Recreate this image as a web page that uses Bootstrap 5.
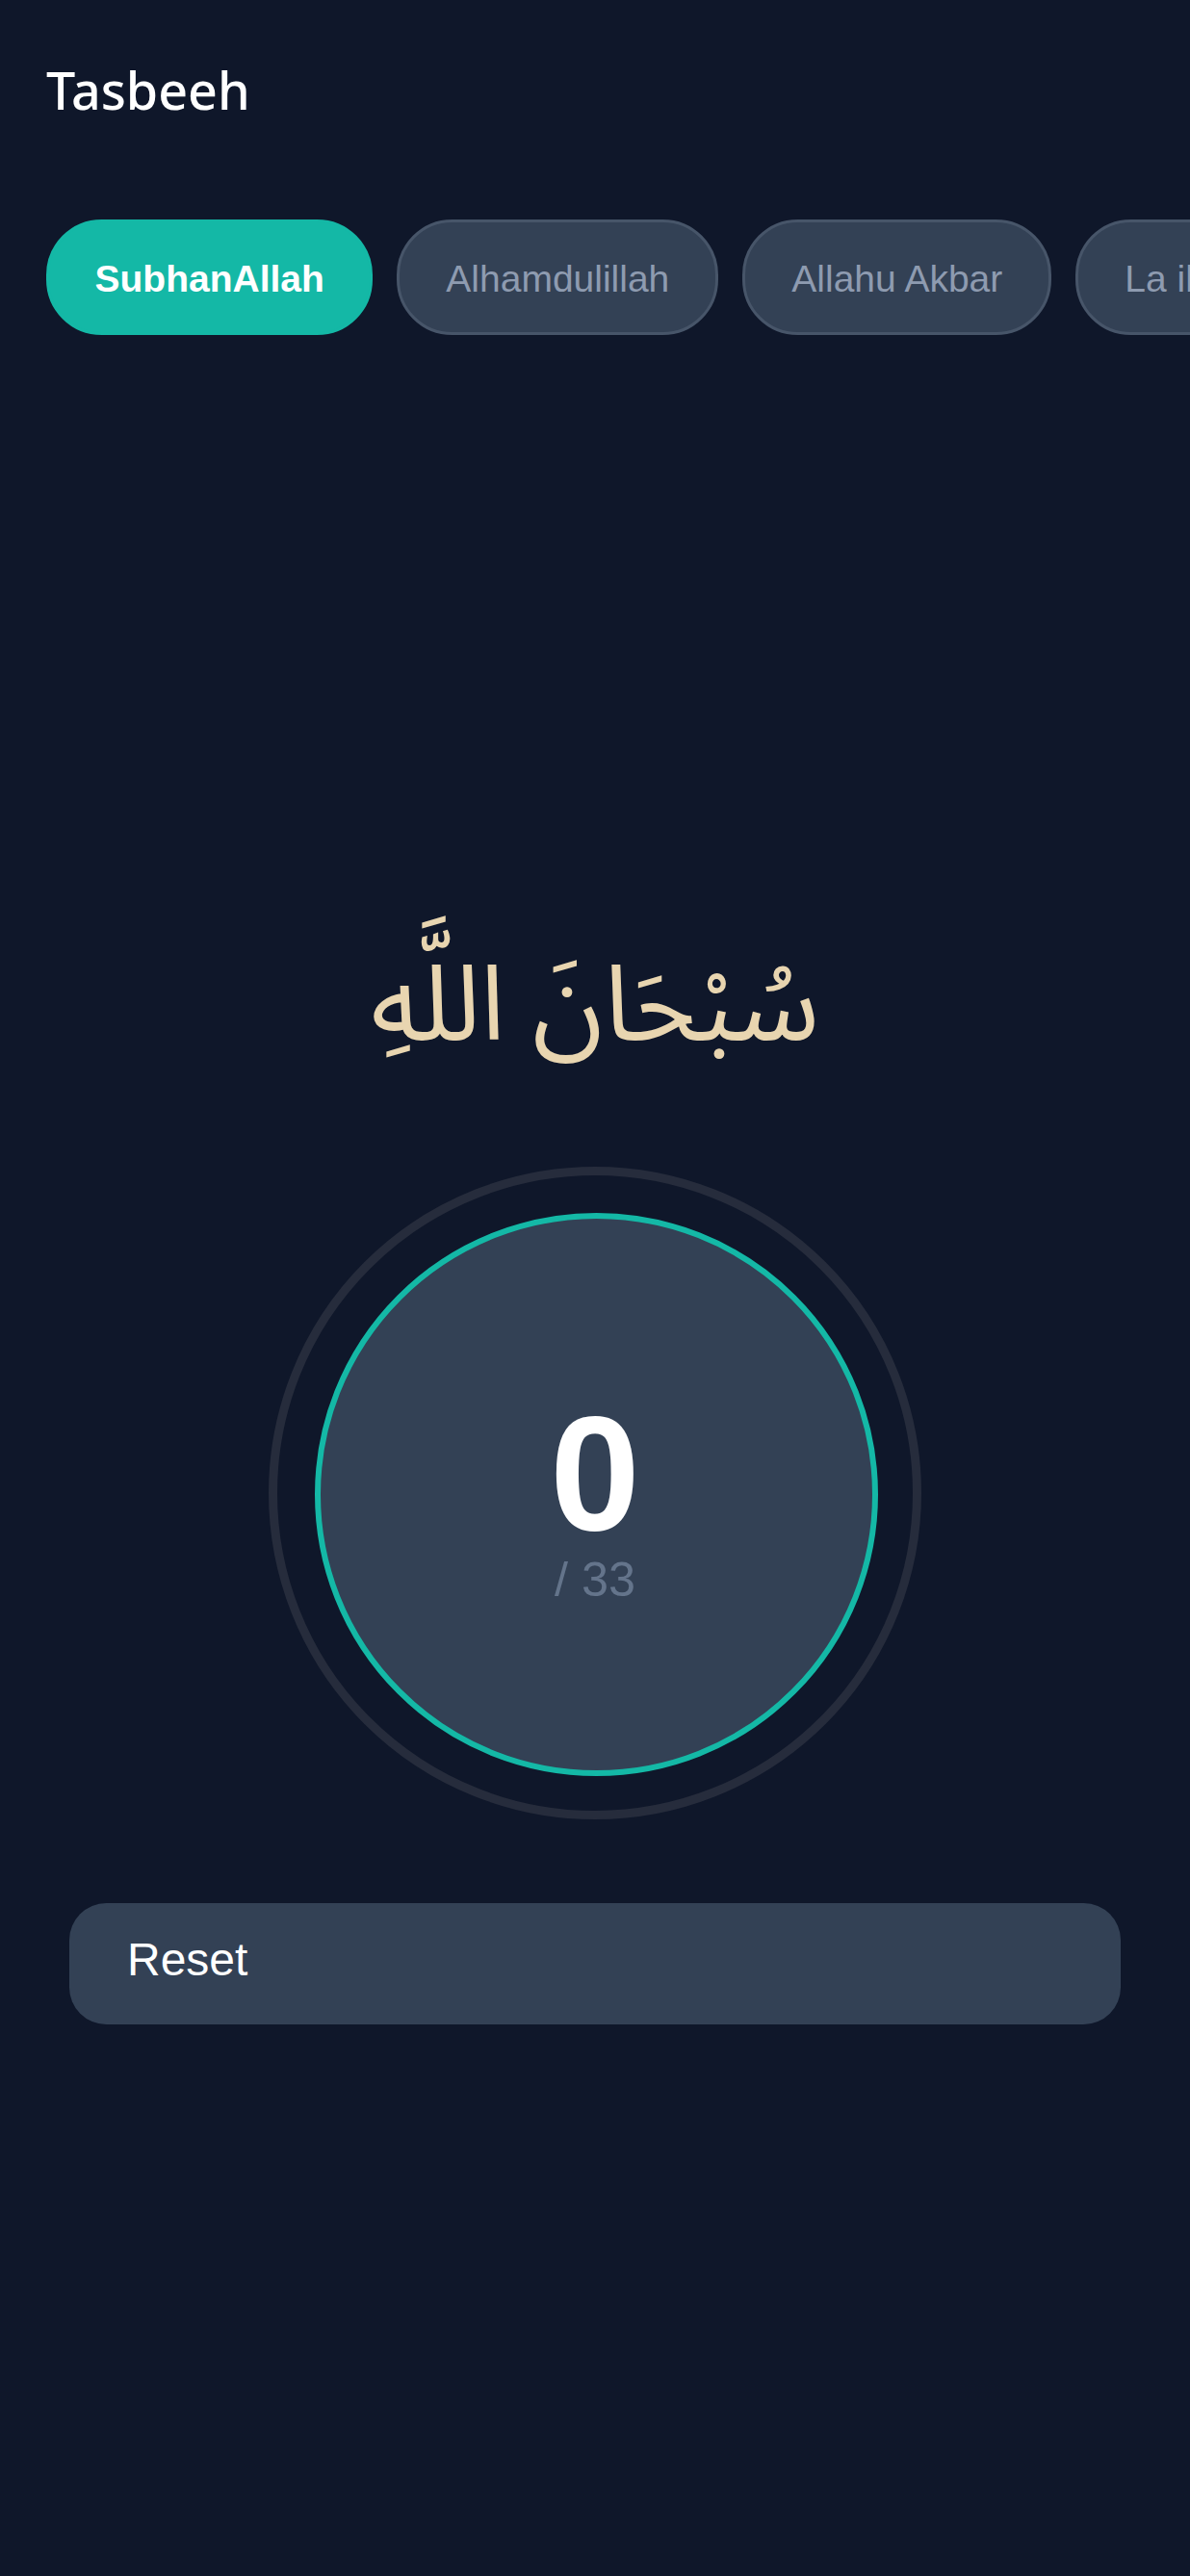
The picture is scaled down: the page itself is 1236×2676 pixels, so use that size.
<!doctype html>
<html lang="en">
<head>
<meta charset="utf-8">
<title>Tasbeeh</title>
<link href="https://cdn.jsdelivr.net/npm/bootstrap@5.3.0/dist/css/bootstrap.min.css" rel="stylesheet">
<style>
html,body{height:100%;}
body{background:#0f172a;font-family:"Liberation Sans",Arial,sans-serif;overflow:hidden;}
.app-head{padding:60px 48px 0;height:228px;}
.app-title{font-family:"Noto Sans",sans-serif;font-size:53.8px;line-height:66px;font-weight:500;color:#fff;margin:0;}
.chip-row{gap:25px;padding-left:48px;overflow:hidden;}
.chip-item{flex:none;height:120px;padding:3px 48px 0;border:3px solid #475569;background:#334155;color:#8e9bb0;border-radius:57.6px;font-size:39px;line-height:1;}
.chip-item.is-on{background:#14b8a6;border-color:#14b8a6;color:#fff;font-weight:700;padding:3px 47.5px 0;}
.arabic-line{margin-top:606px;height:184px;font-family:"Noto Sans Arabic","Noto Sans",sans-serif;font-size:108.8px;line-height:184px;color:#e8d5b0;text-align:center;}
.ring-outer{width:678px;height:678px;margin:74px auto 0;padding:3px 0 0 3px;border:9.6px solid #262c3c;border-radius:50%;}
.ring-inner{width:585px;height:585px;flex:none;padding-right:3px;border:6.8px solid #14b8a6;background:#334155;border-radius:50%;}
.count-num{font-size:168px;line-height:176px;font-weight:700;color:#fff;}
.count-goal{font-size:50.4px;line-height:44px;color:#64748b;}
.reset-wrap{padding:87px 72px 0;}
.reset-btn{height:126px;background:#334155;border:0;border-radius:38.4px;padding:0 60px 8px;color:#fff;font-size:48px;text-align:left;width:100%;}
</style>
</head>
<body>
<header class="app-head"><h1 class="app-title">Tasbeeh</h1></header>
<div class="chip-row d-flex">
  <div class="chip-item is-on d-flex align-items-center">SubhanAllah</div>
  <div class="chip-item d-flex align-items-center">Alhamdulillah</div>
  <div class="chip-item d-flex align-items-center">Allahu Akbar</div>
  <div class="chip-item d-flex align-items-center">La ilaha illallah</div>
</div>
<div class="arabic-line" dir="rtl" lang="ar">سُبْحَانَ اللَّهِ</div>
<div class="ring-outer d-flex align-items-center justify-content-center">
  <div class="ring-inner d-flex flex-column align-items-center justify-content-center">
    <div class="count-num">0</div>
    <div class="count-goal">/ 33</div>
  </div>
</div>
<div class="reset-wrap"><button class="reset-btn" type="button">Reset</button></div>
<script src="https://cdn.jsdelivr.net/npm/bootstrap@5.3.0/dist/js/bootstrap.bundle.min.js"></script>
</body>
</html>
